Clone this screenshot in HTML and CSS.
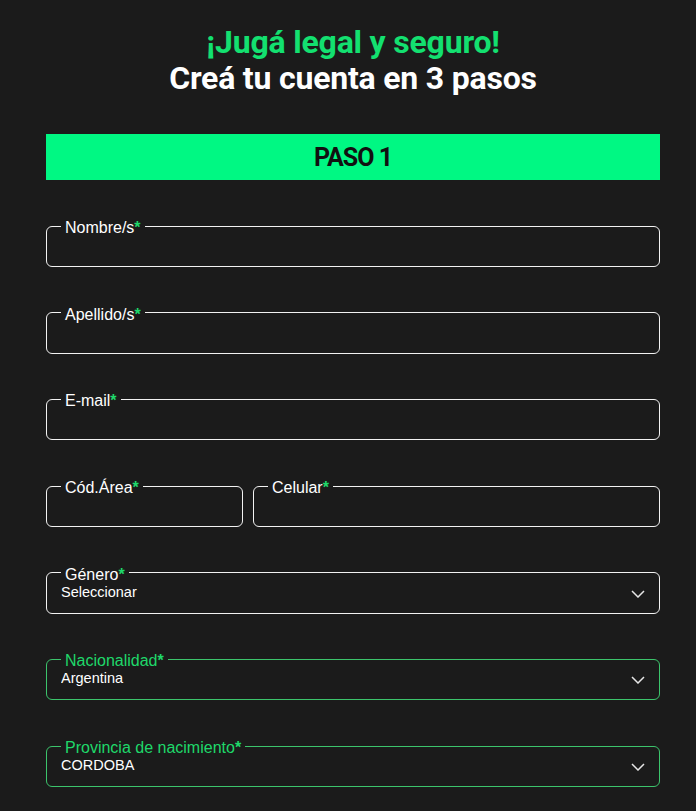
FILE: index.html
```html
<!DOCTYPE html>
<html lang="es">
<head>
    <meta charset="UTF-8">
    <meta name="viewport" content="width=device-width, initial-scale=1.0">
    <title>Registro</title>
    <link rel="stylesheet" href="styles.css">
</head>
<body>
    <div class="container">
        <h1 class="title">
            <span class="title-green">¡Jugá legal y seguro!</span>
            <span class="title-white">Creá tu cuenta en 3 pasos</span>
        </h1>
        <div class="step-bar">PASO 1</div>
        <form class="register-form">
            <fieldset class="field">
                <legend><span class="label">Nombre/s<span class="req">*</span></span></legend>
                <input type="text" name="nombre">
            </fieldset>
            <fieldset class="field">
                <legend><span class="label">Apellido/s<span class="req">*</span></span></legend>
                <input type="text" name="apellido">
            </fieldset>
            <fieldset class="field">
                <legend><span class="label">E-mail<span class="req">*</span></span></legend>
                <input type="email" name="email">
            </fieldset>
            <div class="field-row">
                <fieldset class="field field-area">
                    <legend><span class="label">Cód.Área<span class="req">*</span></span></legend>
                    <input type="text" name="area">
                </fieldset>
                <fieldset class="field field-phone">
                    <legend><span class="label">Celular<span class="req">*</span></span></legend>
                    <input type="text" name="celular">
                </fieldset>
            </div>
            <fieldset class="field field-select">
                <legend><span class="label">Género<span class="req">*</span></span></legend>
                <div class="select-wrap">
                    <select name="genero">
                        <option>Seleccionar</option>
                    </select>
                    <svg class="chevron" width="14" height="8" viewBox="0 0 14 8"><path d="M1 1l6 6 6-6" fill="none" stroke="#e6e6e6" stroke-width="1.5"/></svg>
                </div>
            </fieldset>
            <fieldset class="field field-select field-active">
                <legend><span class="label">Nacionalidad<span class="req">*</span></span></legend>
                <div class="select-wrap">
                    <select name="nacionalidad">
                        <option>Argentina</option>
                    </select>
                    <svg class="chevron" width="14" height="8" viewBox="0 0 14 8"><path d="M1 1l6 6 6-6" fill="none" stroke="#e6e6e6" stroke-width="1.5"/></svg>
                </div>
            </fieldset>
            <fieldset class="field field-select field-active">
                <legend><span class="label">Provincia de nacimiento<span class="req">*</span></span></legend>
                <div class="select-wrap">
                    <select name="provincia">
                        <option>CORDOBA</option>
                    </select>
                    <svg class="chevron" width="14" height="8" viewBox="0 0 14 8"><path d="M1 1l6 6 6-6" fill="none" stroke="#e6e6e6" stroke-width="1.5"/></svg>
                </div>
            </fieldset>
        </form>
    </div>
</body>
</html>
```

FILE: styles.css
```css
body {
    margin: 0;
    background-color: #1b1b1b;
    font-family: "Liberation Sans", Arial, sans-serif;
    color: #ffffff;
}

.container {
    width: 614px;
    margin-left: 46px;
}

.title {
    margin: 0;
    padding-top: 24px;
    display: flex;
    flex-direction: column;
    align-items: center;
    font-family: Roboto, sans-serif;
    font-weight: 700;
    font-size: 32px;
    line-height: 36px;
    letter-spacing: -0.2px;
}

.title-green {
    color: #13e070;
}

.title-white {
    color: #ffffff;
}

.step-bar {
    margin-top: 38px;
    height: 46px;
    background-color: #00f883;
    color: #111111;
    display: flex;
    align-items: center;
    justify-content: center;
    font-family: Roboto, sans-serif;
    font-weight: 700;
    font-size: 25px;
    letter-spacing: -1px;
}

.register-form {
    margin-top: 38px;
    display: flex;
    flex-direction: column;
    gap: 37.7px;
}

.field {
    margin: 0;
    padding: 0 14px;
    height: 49px;
    box-sizing: border-box;
    border: 1px solid #f2f2f2;
    border-radius: 6px;
    min-width: 0;
}

.field legend {
    padding: 0 4px;
    font-size: 16px;
    line-height: 16px;
    color: #ffffff;
}

.label {
    position: relative;
    top: 2px;
}

.req {
    color: #1fd86a;
    font-weight: 700;
}

.field input {
    width: 100%;
    height: 24px;
    background: transparent;
    border: none;
    outline: none;
    color: #ffffff;
    font-size: 14px;
    padding: 0;
}

.field-row {
    display: flex;
    gap: 10px;
}

.field-area {
    width: 197px;
    flex: none;
}

.field-phone {
    flex: 1;
}

.select-wrap {
    position: relative;
    display: flex;
    align-items: center;
    height: 22px;
}

.select-wrap select {
    appearance: none;
    -webkit-appearance: none;
    width: 100%;
    background: transparent;
    border: none;
    outline: none;
    color: #ffffff;
    font-family: "Liberation Sans", Arial, sans-serif;
    font-size: 14.5px;
    padding: 0;
    margin: 0;
}

.chevron {
    position: absolute;
    right: 0;
    top: 9px;
}

.field-active {
    border-color: #3cc46c;
}

.field-active legend {
    color: #1fd86a;
}
```
